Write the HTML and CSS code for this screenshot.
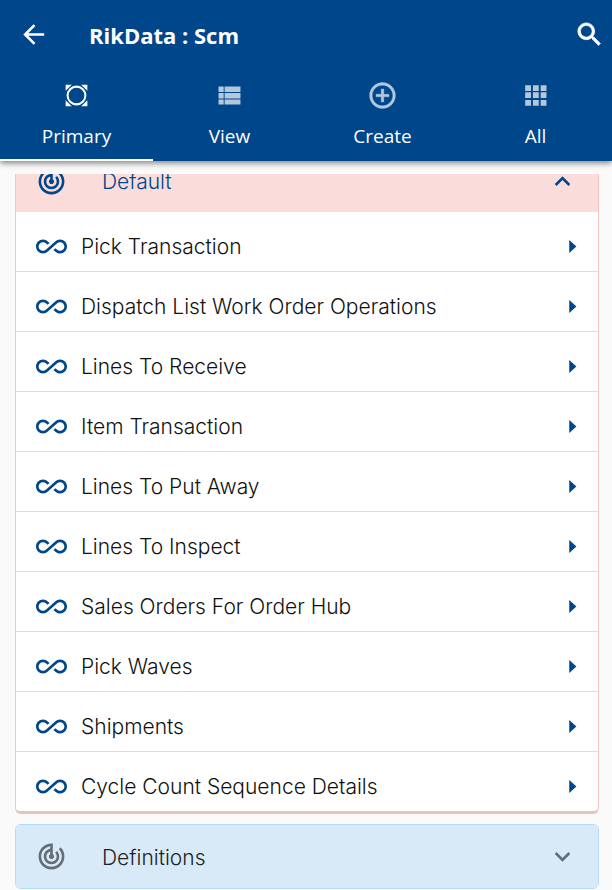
FILE: index.html
```html
<!DOCTYPE html>
<html lang="en">
<head>
<meta charset="utf-8">
<meta name="viewport" content="width=device-width, initial-scale=1">
<title>RikData : Scm</title>
<link rel="stylesheet" href="styles.css">
</head>
<body>
<svg class="sprite" aria-hidden="true">
  <symbol id="loop" viewBox="0 0 24 24"><path d="M18.6 6.62c-1.44 0-2.8.56-3.77 1.53L12 10.66 10.48 12h.01L7.8 14.39c-.64.64-1.49.99-2.4.99-1.87 0-3.39-1.51-3.39-3.38S3.53 8.62 5.4 8.62c.91 0 1.76.35 2.44 1.03l1.13 1 1.51-1.34L9.22 8.2C8.2 7.18 6.84 6.62 5.4 6.62 2.42 6.62 0 9.04 0 12s2.42 5.38 5.4 5.38c1.44 0 2.8-.56 3.77-1.53l2.83-2.5.01.01L13.52 12h-.01l2.69-2.39c.64-.64 1.49-.99 2.4-.99 1.87 0 3.39 1.51 3.39 3.38s-1.52 3.38-3.39 3.38c-.9 0-1.76-.35-2.44-1.03l-1.14-1.01-1.51 1.34 1.27 1.12c1.02 1.01 2.37 1.57 3.82 1.57 2.98 0 5.4-2.41 5.4-5.38s-2.42-5.38-5.4-5.38z"/></symbol>
  <symbol id="track" viewBox="0 0 24 24"><path d="M19.07 4.93l-1.41 1.41C19.1 7.79 20 9.79 20 12c0 4.42-3.58 8-8 8s-8-3.58-8-8c0-4.08 3.05-7.44 7-7.93v2.02C8.16 6.57 6 9.03 6 12c0 3.31 2.69 6 6 6s6-2.69 6-6c0-1.66-.67-3.16-1.76-4.24l-1.41 1.41C15.55 9.9 16 10.9 16 12c0 2.21-1.79 4-4 4s-4-1.79-4-4c0-1.86 1.28-3.41 3-3.86v2.14c-.6.35-1 .98-1 1.72 0 1.1.9 2 2 2s2-.9 2-2c0-.74-.4-1.38-1-1.72V2h-1C6.48 2 2 6.48 2 12s4.48 10 10 10 10-4.48 10-10c0-2.76-1.12-5.26-2.93-7.07z"/></symbol>
  <symbol id="right" viewBox="0 0 24 24"><path d="M9.500 17l5.500-5-5.500-5z"/></symbol>
</svg>

<header class="appbar">
  <div class="toolbar">
    <button class="icon-button" type="button" aria-label="Back"><svg class="icon" viewBox="0 0 24 24"><path class="line" d="M19.5 12H5M12 4.7L4.7 12l7.3 7.3"/></svg></button>
    <h1 class="title">RikData : Scm</h1>
    <button class="icon-button" type="button" aria-label="Search"><svg class="icon" viewBox="0 0 24 24"><path d="M15.5 14h-.79l-.28-.27C15.41 12.59 16 11.11 16 9.5 16 5.91 13.09 3 9.5 3S3 5.91 3 9.5 5.91 16 9.5 16c1.61 0 3.09-.59 4.23-1.57l.27.28v.79l5 4.99L20.49 19l-4.99-5zm-6 0C7.01 14 5 11.99 5 9.5S7.01 5 9.5 5 14 7.01 14 9.5 11.99 14 9.5 14z" stroke="currentColor" stroke-width=".5"/></svg></button>
  </div>
  <nav class="tabs">
    <button class="tab tab-active" type="button"><svg class="icon" viewBox="0 0 30 30"><circle class="line" cx="15" cy="15" r="8.6"/><path d="M4.500 4.500h6l-6 6zM25.500 4.500v6l-6-6zM4.500 25.500v-6l6 6zM25.500 25.500h-6l6-6z"/></svg>Primary</button>
    <button class="tab" type="button"><svg class="icon" viewBox="0 0 24 24"><path d="M3.500 5h4v4.300h-4zM8.200 5h12.300v4.300h-12.300zM3.500 10h4v4.300h-4zM8.200 10h12.300v4.300h-12.300zM3.500 15h4v4h-4zM8.200 15h12.300v4h-12.300z"/></svg>View</button>
    <button class="tab" type="button"><svg class="icon" viewBox="0 0 24 24"><path d="M13 7h-2v4H7v2h4v4h2v-4h4v-2h-4V7zm-1-5C6.480 2 2 6.480 2 12s4.480 10 10 10 10-4.480 10-10S17.520 2 12 2zm0 18c-4.410 0-8-3.590-8-8s3.590-8 8-8 8 3.590 8 8-3.590 8-8 8z" stroke="currentColor" stroke-width=".3"/></svg>Create</button>
    <button class="tab" type="button"><svg class="icon" viewBox="0 0 24 24"><path d="M4 8.500h4.500V4H4v4.500zm6 11.500h4.500v-4.500h-4.500v4.500zm-6 0h4.500v-4.500H4v4.500zm0-6h4.500v-4.500H4v4.500zm6 0h4.500v-4.500h-4.500v4.500zm6-10v4.500h4.500V4H16zm-6 4.500h4.500V4H10v4.500zm6 5.500h4.500v-4.500H16v4.500zm0 6h4.500v-4.500H16v4.500z"/></svg>All</button>
  </nav>
</header>

<main class="content">
  <section class="group group-open">
    <button class="group-head" type="button" aria-expanded="true"><svg class="icon"><use href="#track"/></svg><span class="label">Default</span><svg class="icon" viewBox="0 0 24 24"><path d="M12 8l-6 6 1.410 1.410L12 10.830l4.590 4.580L18 14z"/></svg></button>
    <ul class="rows">
      <li><a class="row" href="#"><svg class="icon"><use href="#loop"/></svg><span class="label">Pick Transaction</span><svg class="icon"><use href="#right"/></svg></a></li>
      <li><a class="row" href="#"><svg class="icon"><use href="#loop"/></svg><span class="label">Dispatch List Work Order Operations</span><svg class="icon"><use href="#right"/></svg></a></li>
      <li><a class="row" href="#"><svg class="icon"><use href="#loop"/></svg><span class="label">Lines To Receive</span><svg class="icon"><use href="#right"/></svg></a></li>
      <li><a class="row" href="#"><svg class="icon"><use href="#loop"/></svg><span class="label">Item Transaction</span><svg class="icon"><use href="#right"/></svg></a></li>
      <li><a class="row" href="#"><svg class="icon"><use href="#loop"/></svg><span class="label">Lines To Put Away</span><svg class="icon"><use href="#right"/></svg></a></li>
      <li><a class="row" href="#"><svg class="icon"><use href="#loop"/></svg><span class="label">Lines To Inspect</span><svg class="icon"><use href="#right"/></svg></a></li>
      <li><a class="row" href="#"><svg class="icon"><use href="#loop"/></svg><span class="label">Sales Orders For Order Hub</span><svg class="icon"><use href="#right"/></svg></a></li>
      <li><a class="row" href="#"><svg class="icon"><use href="#loop"/></svg><span class="label">Pick Waves</span><svg class="icon"><use href="#right"/></svg></a></li>
      <li><a class="row" href="#"><svg class="icon"><use href="#loop"/></svg><span class="label">Shipments</span><svg class="icon"><use href="#right"/></svg></a></li>
      <li><a class="row" href="#"><svg class="icon"><use href="#loop"/></svg><span class="label">Cycle Count Sequence Details</span><svg class="icon"><use href="#right"/></svg></a></li>
    </ul>
  </section>
  <section class="group group-closed">
    <button class="group-head" type="button" aria-expanded="false"><svg class="icon"><use href="#track"/></svg><span class="label">Definitions</span><svg class="icon" viewBox="0 0 24 24"><path d="M16.590 8.590L12 13.170 7.410 8.590 6 10l6 6 6-6z"/></svg></button>
  </section>
</main>
</body>
</html>
```

FILE: styles.css
```css
* { box-sizing: border-box; }

body {
  margin: 0;
  background: #fafafa;
  color: #111;
  font-family: Inter, "Liberation Sans", sans-serif;
  font-size: 21px;
  font-weight: 300;
  line-height: 26px;
}

button {
  margin: 0;
  padding: 0;
  border: 0;
  background: none;
  color: inherit;
  font: inherit;
  cursor: pointer;
}

.sprite { display: none; }

.icon {
  display: block;
  flex: none;
  width: 31px;
  height: 31px;
  fill: currentColor;
}

.line {
  fill: none;
  stroke: currentColor;
  stroke-width: 2;
}

.appbar {
  background: #00468b;
  color: #fff;
  font-family: "Open Sans", "Noto Sans", sans-serif;
  box-shadow: 0 2px 6px rgba(0, 0, 0, 0.5);
}

.toolbar {
  display: flex;
  align-items: center;
  height: 68px;
  padding: 0 7px 0 19px;
}

.title {
  flex: 1;
  margin: 0;
  padding: 2px 0 0 39px;
  font-size: 22px;
  font-weight: 700;
  line-height: 30px;
}

.tabs {
  display: grid;
  grid-template-columns: repeat(4, 1fr);
}

.tab {
  display: flex;
  flex-direction: column;
  align-items: center;
  gap: 12px;
  height: 93px;
  padding-top: 12px;
  border-bottom: 2px solid transparent;
  font-size: 19px;
  font-weight: 400;
}

.tab-active { border-color: #fff; }

.tab .icon { opacity: 0.7; }

.tab-active .icon { opacity: 1; }

.content {
  display: flex;
  flex-direction: column;
  gap: 10px;
  margin-top: 13px;
  padding: 0 13px 0 15px;
  overflow: hidden;
}

.group {
  overflow: hidden;
  border: 1px solid #f3c6c4;
  border-radius: 6px;
}

/* The list rests partly scrolled under the app bar. */
.group-open {
  margin-top: -25px;
  border-bottom: 3px solid #e8c0be;
}

.group-head {
  display: flex;
  align-items: center;
  width: 100%;
  height: 62px;
  padding: 0 20px;
  background: #fadddb;
  color: #00468b;
  text-align: left;
}

.group-closed { border-color: #b5dcf6; }

.group-closed .group-head {
  height: 63px;
  background: #d8eaf8;
  color: #222;
}

.group-closed .icon { color: #626d75; }

.label {
  flex: 1;
  padding: 2px 0 0 14px;
}

.group-head .label { padding-left: 35px; }

.rows {
  margin: 0;
  padding: 0;
  background: #fff;
  list-style: none;
}

.row {
  display: flex;
  align-items: center;
  height: 60px;
  padding: 9px 10px 0 20px;
  border-bottom: 1px solid #d8dfe0;
  color: inherit;
  text-decoration: none;
}

.row .icon { color: #00468b; }

li:last-child .row {
  height: 59px;
  border-bottom: 0;
}
```
